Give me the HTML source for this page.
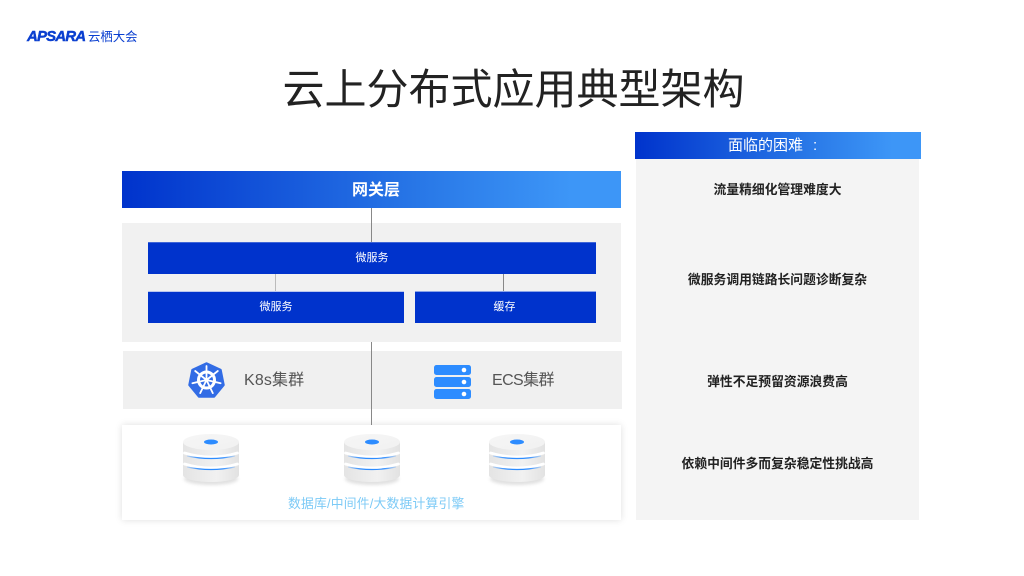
<!DOCTYPE html>
<html lang="zh"><head><meta charset="utf-8"><title>云上分布式应用典型架构</title>
<style>
html,body{margin:0;padding:0;background:#fff}
#p{position:relative;width:1024px;height:576px;overflow:hidden;background:#fff;font-family:"Liberation Sans","Noto Sans CJK SC",sans-serif}
#p div{position:absolute}
.t{text-align:center;white-space:nowrap}
.g{background:linear-gradient(90deg,#0033cc 0%,#2a7ae8 62%,#3d96f7 90%,#3d96f7 100%)}
.b{background:#0033cc;border-top:1px solid #3f66d8;box-sizing:border-box;color:#fff;font-size:11px;text-align:center}
.q{left:636px;width:283px;text-align:center;font-size:12.8px;font-weight:700;color:#222;white-space:nowrap;height:20px;line-height:20px}
svg{position:absolute}
</style></head><body><div id="p">

<div style="left:27px;top:28px;height:18px;line-height:18px;font-size:15px;font-weight:700;font-style:italic;color:#0a3fd0;letter-spacing:-.85px;-webkit-text-stroke:.45px #0a3fd0">APSARA</div>
<div style="left:88px;top:28px;height:18px;line-height:18px;font-size:12.4px;color:#0a3fd0;white-space:nowrap">云栖大会</div>

<div class="t" style="left:0;width:1027px;top:59px;height:62px;line-height:62px;font-size:42px;font-weight:400;color:#222">云上分布式应用典型架构</div>

<!-- left column -->
<div class="g" style="left:122px;top:171px;width:499px;height:37px"></div>
<div style="left:352px;top:172px;height:37px;line-height:37px;color:#fff;font-size:16px;font-weight:700;white-space:nowrap">网关层</div>
<div style="left:122px;top:223px;width:499px;height:119px;background:#f1f1f1"></div>
<div style="left:371px;top:208px;width:1px;height:34px;background:#888"></div>
<div class="b" style="left:148px;top:242px;width:448px;height:32px;line-height:30px">微服务</div>
<div style="left:275px;top:274px;width:1px;height:18px;background:#bbb"></div>
<div style="left:503px;top:274px;width:1px;height:18px;background:#888"></div>
<div class="b" style="left:148px;top:291px;width:256px;height:32px;line-height:30px;border-top-color:#b9c6ee">微服务</div>
<div class="b" style="left:415px;top:291px;width:181px;height:32px;line-height:30px;border-top-color:#8aa3e8;padding-right:2px">缓存</div>

<div style="left:123px;top:351px;width:499px;height:58px;background:#f0f0f0"></div>
<div style="left:122px;top:425px;width:499px;height:95px;background:#fff;box-shadow:0 0 7px rgba(0,0,0,.13)"></div>
<div style="left:371px;top:342px;width:1px;height:83px;background:#888"></div>

<svg style="left:186px;top:360px" width="42" height="40" viewBox="186 360 42 40">
<polygon points="206.5,363.5 220.5,370 223.500,385 214,396.500 199,396.500 189.500,385 192.500,370" fill="#326ce5" stroke="#326ce5" stroke-width="2.500" stroke-linejoin="round"/>
<circle cx="206.5" cy="380" r="8" fill="none" stroke="#fff" stroke-width="3"/>
<circle cx="206.5" cy="380" r="2" fill="#fff"/>
<g stroke="#fff" stroke-width="1.800" stroke-linecap="round">
<path d="M206.5 380V366"/>
<path d="M206.5 380L217.800 371M206.5 380L195.200 371"/>
<path d="M206.5 380L220.600 383.200M206.500 380L192.400 383.200"/>
<path d="M206.5 380L212.800 393.100M206.500 380L200.200 393.100"/>
</g>
</svg>
<div style="left:244px;top:369px;height:24px;line-height:24px;font-size:16px;color:#555;white-space:nowrap;letter-spacing:.15px">K8s集群</div>

<svg style="left:434px;top:365px" width="38" height="35" viewBox="0 0 38 35">
<rect x="0" y="0" width="37" height="10" rx="2.5" fill="#2d8cff"/>
<rect x="0" y="12" width="37" height="10" rx="2.5" fill="#2d8cff"/>
<rect x="0" y="24" width="37" height="10" rx="2.5" fill="#2d8cff"/>
<circle cx="30" cy="5" r="2.3" fill="#fff"/><circle cx="30" cy="17" r="2.3" fill="#fff"/><circle cx="30" cy="29" r="2.3" fill="#fff"/>
</svg>
<div style="left:492px;top:369px;height:24px;line-height:24px;font-size:16px;color:#555;white-space:nowrap;letter-spacing:-.6px">ECS集群</div>

<!-- disks -->
<svg width="0" height="0" style="left:0;top:0">
<defs>
<linearGradient id="s" x1="0" x2="1" y1="0" y2="0"><stop offset="0" stop-color="#e4e4e4"/><stop offset=".6" stop-color="#f1f1f1"/><stop offset="1" stop-color="#e2e2e2"/></linearGradient>
<linearGradient id="u" x1="0" x2="1" y1="0" y2="1"><stop offset="0" stop-color="#f6f6f6"/><stop offset="1" stop-color="#f1f1f1"/></linearGradient>
<linearGradient id="l" x1="0" x2="1" y1="0" y2="0"><stop offset="0" stop-color="#2d8cff" stop-opacity=".2"/><stop offset=".25" stop-color="#2d8cff"/><stop offset=".75" stop-color="#2d8cff"/><stop offset="1" stop-color="#2d8cff" stop-opacity=".2"/></linearGradient>
<filter id="f" x="-20%" y="-50%" width="140%" height="200%"><feGaussianBlur stdDeviation="1.500"/></filter>
<symbol id="d" viewBox="0 0 60 56">
<ellipse cx="30" cy="47" rx="27" ry="6" fill="#e0e0e0" filter="url(#f)"/>
<path d="M2 10V43C2 47 15 50 30 50S58 47 58 43V10Z" fill="url(#s)"/>
<path d="M3.500 21Q30 29 56.500 21" fill="none" stroke="#fff" stroke-width="2.800" stroke-linecap="round"/>
<path d="M6 24Q30 29 54 24" fill="none" stroke="url(#l)" stroke-width="1.200"/>
<path d="M3.500 32Q30 40 56.500 32" fill="none" stroke="#fff" stroke-width="2.800" stroke-linecap="round"/>
<path d="M6 35Q30 40 54 35" fill="none" stroke="url(#l)" stroke-width="1.200"/>
<ellipse cx="30" cy="10" rx="28" ry="8" fill="url(#u)"/>
<ellipse cx="30" cy="10" rx="7" ry="2.500" fill="#2d8cff"/>
</symbol>
</defs>
</svg>
<svg style="left:181px;top:432px" width="60" height="56"><use href="#d"/></svg>
<svg style="left:342px;top:432px" width="60" height="56"><use href="#d"/></svg>
<svg style="left:487px;top:432px" width="60" height="56"><use href="#d"/></svg>
<div style="left:288px;top:494px;height:20px;line-height:20px;font-size:12.8px;color:#7ccaf6;white-space:nowrap;letter-spacing:.2px">数据库/中间件/大数据计算引擎</div>

<!-- right column -->
<div class="g" style="left:635px;top:132px;width:286px;height:27px"></div>
<div style="left:728px;top:134px;height:24px;line-height:24px;color:#fff;font-size:15px;white-space:nowrap">面临的困难<span style="margin-left:10px">:</span></div>
<div style="left:636px;top:159px;width:283px;height:361px;background:#f4f4f4"></div>
<div class="q" style="top:180px;left:636px">流量精细化管理难度大</div>
<div class="q" style="top:270px;left:636px">微服务调用链路长问题诊断复杂</div>
<div class="q" style="top:372px;left:636px">弹性不足预留资源浪费高</div>
<div class="q" style="top:454px;left:636px">依赖中间件多而复杂稳定性挑战高</div>

</div></body></html>
